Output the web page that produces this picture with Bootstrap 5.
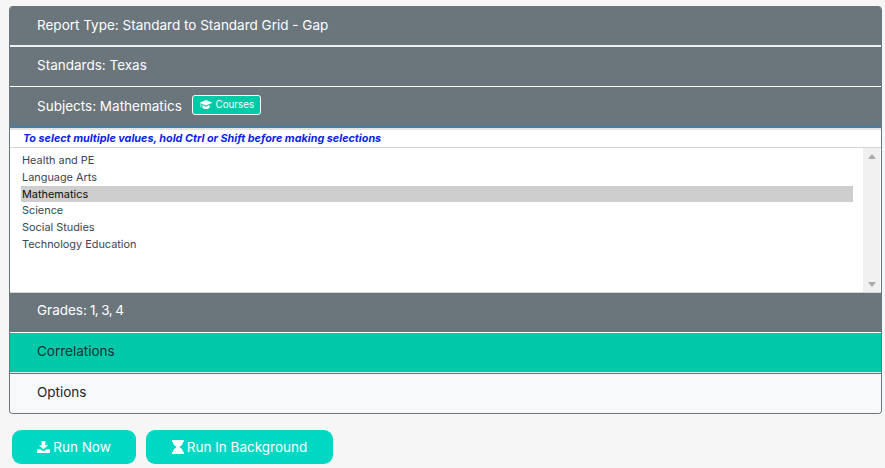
<!DOCTYPE html>
<html lang="en">
<head>
<meta charset="utf-8">
<title>Report</title>
<link href="https://cdn.jsdelivr.net/npm/bootstrap@5.3.0/dist/css/bootstrap.min.css" rel="stylesheet">
<style>
html,body{height:468px;overflow:hidden}
body{background:#f6f6f6;font-family:Inter,"Liberation Sans",sans-serif;padding:6px 3px 0 9px}
.rpt-acc{border:1px solid #6a767c;border-top:0;border-radius:4px;overflow:hidden;background:#fff}
.rpt-head{height:40px;display:flex;align-items:center;padding:0 0 3px 27px;background:#6a767c;color:#fff;font-size:13.5px;font-weight:400;border-bottom:1px solid #fff}
.rpt-head.first{height:41px;padding-bottom:1px;border-bottom-width:2px;border-bottom-color:#f0f0f0}
.rpt-head.open{height:43px;padding-bottom:2px;border-bottom:2px solid #e4e4e4;position:relative}
.rpt-head.open::after{content:"";position:absolute;inset:0;border-bottom:2px solid #3f7fae;border-radius:0 0 8px 8px;pointer-events:none}
.rpt-head.grades{padding-bottom:4px}
.rpt-head.teal{background:#00c9a7;color:#17323a;border-bottom-color:#d9ece8}
.rpt-head.plain{background:#f8f9fa;color:#212529;border-top:1px solid #6a767c;border-bottom:0;height:40px;padding-bottom:3px}
.rpt-digits{letter-spacing:-.6px;margin-left:3px}
.rpt-courses{background:#00c9a7;color:#fff;border:1px solid #fff;border-radius:3px;font-size:9.8px;height:20px;width:69px;margin-left:10px;display:inline-flex;align-items:center;justify-content:center;gap:3px;margin-top:-3px;line-height:1}
.rpt-note{height:18px;border-bottom:1px solid #ced4da;font-size:10.8px;line-height:17px;padding-left:13px;color:#0d1ee8;font-weight:700;font-style:italic;background:#fff}
.rpt-listwrap{height:145px;border-bottom:1px solid #ced4da;background:#fff}
.rpt-pick{display:block;flex:1 1 auto;min-width:0;height:144px;border:0;padding:4px 10px 0 11px;outline:0;font-family:inherit;font-size:10.9px;color:#3a4651;overflow:hidden;background:#fff}
.rpt-pick option{height:16.8px;padding:1px 1px;line-height:14px}
.rpt-pick option:checked{background:#cecece linear-gradient(#cecece,#cecece)}
.rpt-track{width:17px;flex:0 0 17px;background:#f1f0f0;padding:6px 0 5px;margin-right:1px}
.rpt-up,.rpt-down{width:0;height:0;border-left:4px solid transparent;border-right:4px solid transparent}
.rpt-up{border-bottom:5px solid #a8a8a8}
.rpt-down{border-top:5px solid #a8a8a8}
.rpt-run{background:#00d8c4;color:#fff;border:0;border-radius:9px;height:34px;font-size:13.5px;font-weight:400;display:inline-flex;align-items:center;justify-content:center;gap:3px;padding:0;margin:0}
.rpt-run:hover{background:#00d8c4;color:#fff}
.w-now{width:124px}.w-bg{width:187px}
.rpt-actions{margin:16px 0 0 3px;gap:10px}
</style>
</head>
<body>
<div class="rpt-acc">
  <div class="rpt-head first">Report Type: Standard to Standard Grid - Gap</div>
  <div class="rpt-head">Standards: Texas</div>
  <div class="rpt-head open"><span>Subjects: Mathematics</span>
    <span class="rpt-courses"><svg width="14" height="10" viewBox="0 0 14 11" fill="#fff"><path d="M7 0 14 3 7 6 0 3z"/><path d="M3 5.600 7 7.300l4-1.700V8c0 1-2 2-4 2S3 9 3 8z"/><path d="M1 3.500h.8v4.500H1z"/></svg>Courses</span></div>
  <div class="rpt-note">To select multiple values, hold Ctrl or Shift before making selections</div>
  <div class="rpt-listwrap d-flex">
    <select class="rpt-pick" multiple aria-label="Subjects">
      <option>Health and PE</option>
      <option>Language Arts</option>
      <option selected>Mathematics</option>
      <option>Science</option>
      <option>Social Studies</option>
      <option>Technology Education</option>
    </select>
    <div class="rpt-track d-flex flex-column justify-content-between align-items-center" aria-hidden="true"><div class="rpt-up"></div><div class="rpt-down"></div></div>
  </div>
  <div class="rpt-head grades">Grades:<span class="rpt-digits">1, 3, 4</span></div>
  <div class="rpt-head teal">Correlations</div>
  <div class="rpt-head plain">Options</div>
</div>
<div class="d-flex rpt-actions">
  <button type="button" class="btn rpt-run w-now"><svg width="13" height="12" viewBox="0 0 14 13" fill="#fff"><path d="M5 0h4v4.500h3L7 9 2 4.500h3z"/><path d="M0 9h3.500L7 11 10.500 9H14v4H0z"/></svg>Run Now</button>
  <button type="button" class="btn rpt-run w-bg"><svg width="12" height="14" viewBox="0 0 13 15" fill="#fff"><path d="M0 0h13v2h-1c0 3-2 4-4 5.500 2 1.500 4 2.500 4 5.500h1v2H0v-2h1c0-3 2-4 4-5.500C3 6 1 5 1 2H0z"/></svg>Run In Background</button>
</div>
<script src="https://cdn.jsdelivr.net/npm/bootstrap@5.3.0/dist/js/bootstrap.bundle.min.js"></script>
</body>
</html>
